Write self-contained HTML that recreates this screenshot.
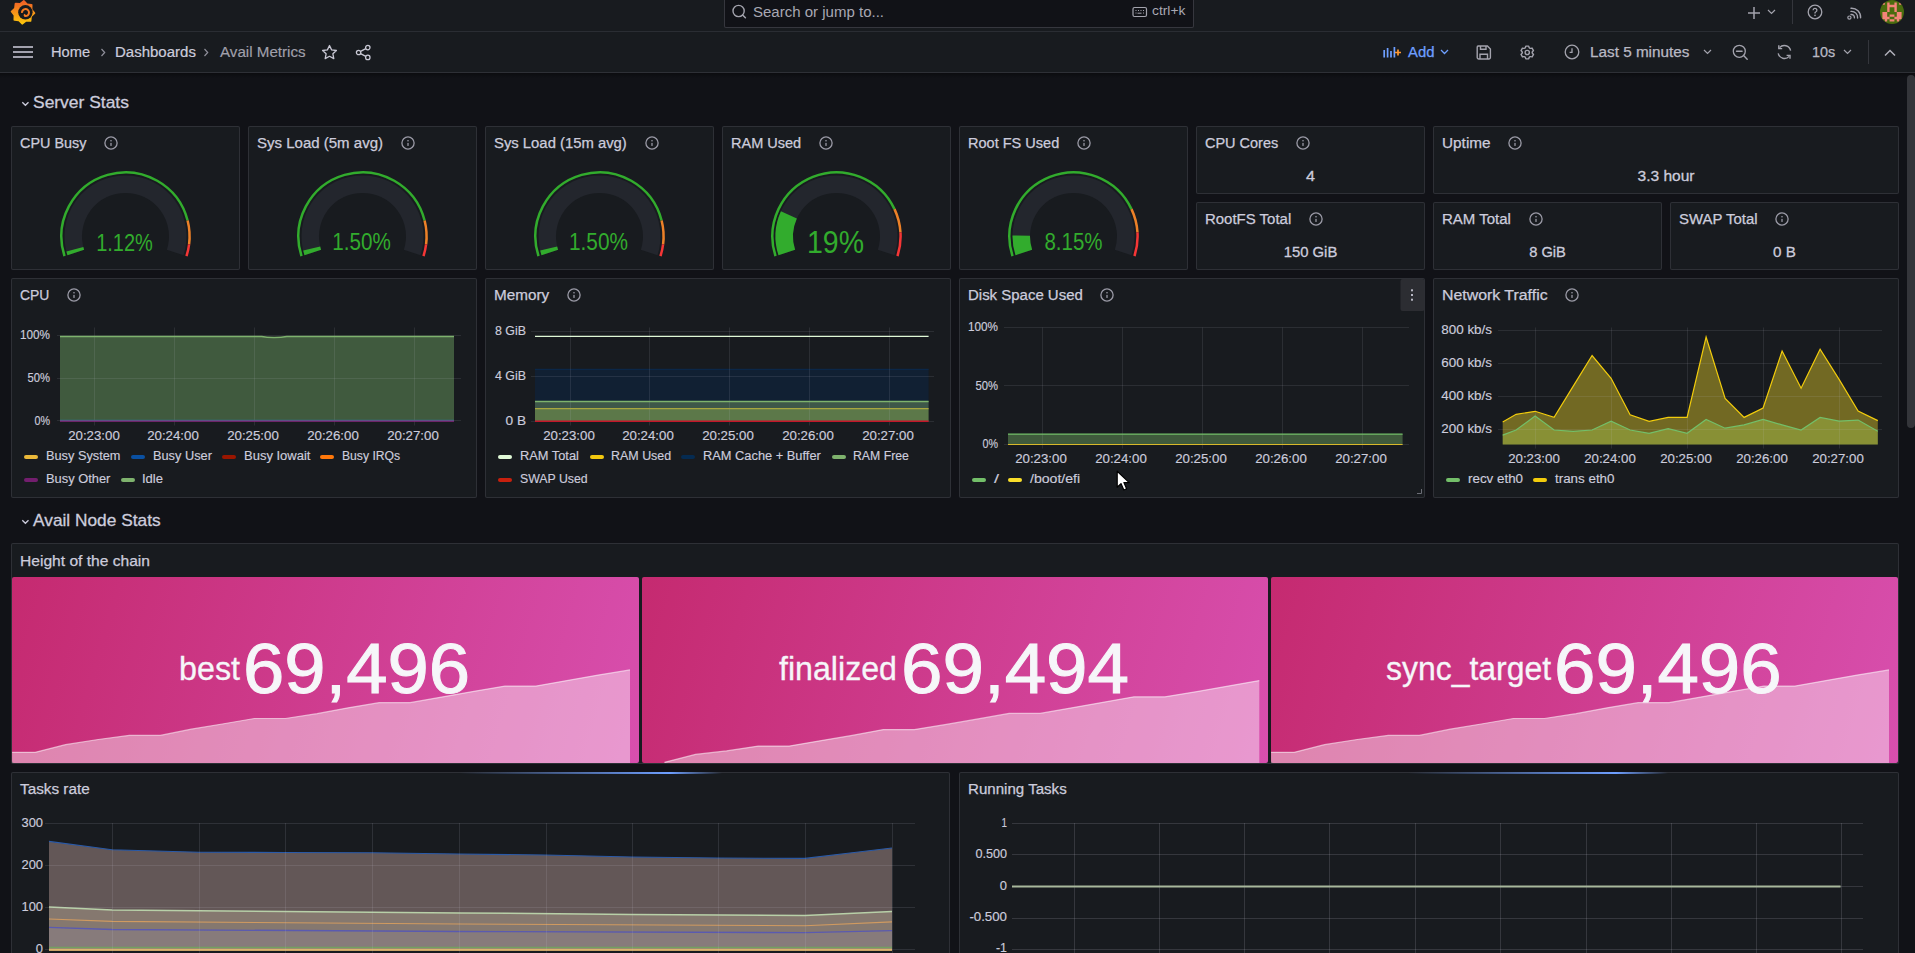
<!DOCTYPE html><html><head><meta charset="utf-8"><style>
*{box-sizing:border-box;margin:0;padding:0}
html,body{width:1915px;height:953px;overflow:hidden;background:#111217;font-family:"Liberation Sans",sans-serif;color:#ccccdc}
.a{position:absolute}
.pn{position:absolute;background:#181b1f;border:1px solid rgba(204,204,220,0.12);border-radius:2px}
.tt{position:absolute;font-size:14px;line-height:16px;color:#ccccdc;white-space:nowrap;-webkit-text-stroke:0.25px #ccccdc}
.sv{position:absolute;font-size:15px;line-height:18px;color:#ccccdc;white-space:nowrap;text-align:center;-webkit-text-stroke:0.3px #ccccdc}
.ax{position:absolute;font-size:12px;line-height:14px;color:#ccccdc;white-space:nowrap}
.lg{position:absolute;font-size:12px;line-height:14px;color:#ccccdc;white-space:nowrap}
.lb{position:absolute;width:14px;height:4px;border-radius:2px}
svg{position:absolute;overflow:visible}
</style></head><body><div class="a" style="left:0;top:0;width:1915px;height:31px;background:#181b1f"></div>
<div class="a" style="left:0;top:31px;width:1915px;height:1px;background:#2a2d33"></div>
<div class="a" style="left:0;top:32px;width:1915px;height:40px;background:#181b1f"></div>
<div class="a" style="left:0;top:72px;width:1915px;height:1px;background:#2e3036"></div>
<div class="a" style="left:0;top:73px;width:1915px;height:5px;background:linear-gradient(rgba(0,0,0,0.35),rgba(0,0,0,0))"></div>
<svg style="left:0;top:0" width="40" height="30" viewBox="0 0 40 30">
<defs><linearGradient id="lg1" x1="0" y1="0" x2="0" y2="1"><stop offset="0" stop-color="#f05a28"/><stop offset="1" stop-color="#fbca0a"/></linearGradient></defs>
<path fill="url(#lg1)" d="M23.00 0.40 L23.86 -0.07 L24.66 0.52 L27.42 3.44 L31.41 3.89 L32.36 4.16 L32.50 5.14 L32.39 9.16 L34.90 12.30 L35.37 13.16 L34.78 13.96 L31.86 16.72 L31.41 20.71 L31.14 21.66 L30.16 21.80 L26.14 21.69 L23.00 24.20 L22.14 24.67 L21.34 24.08 L18.58 21.16 L14.59 20.71 L13.64 20.44 L13.50 19.46 L13.61 15.44 L11.10 12.30 L10.63 11.44 L11.22 10.64 L14.14 7.88 L14.59 3.89 L14.86 2.94 L15.84 2.80 L19.86 2.91Z"/>
<circle cx="25.4" cy="12.3" r="7.2" fill="#181b1f"/>
<path d="M22.01 12.91 A3.5 3.5 0 1 1 25.19 16.09 Q24.20 15.40 24.90 14.20" fill="none" stroke="#f47a22" stroke-width="2"/>
</svg>
<div class="a" style="left:724px;top:-6px;width:470px;height:34px;background:#111217;border:1px solid rgba(204,204,220,0.2);border-radius:2px"></div>
<svg style="left:731px;top:4px" width="16" height="16" viewBox="0 0 16 16"><circle cx="7.6" cy="7" r="5.6" fill="none" stroke="#a3a3ad" stroke-width="1.4"/><path d="M11.6 11 L14.4 13.8" stroke="#a3a3ad" stroke-width="1.5" stroke-linecap="round"/></svg>
<div class="a" style="left:753px;top:3.0px;font-size:14px;line-height:18px;color:#a8a8b3;white-space:nowrap;;transform:scaleX(1.0724);transform-origin:left center;">Search or jump to...</div>
<svg style="left:1132px;top:6px" width="16" height="12" viewBox="0 0 16 12"><rect x="1" y="1.5" width="13.5" height="9" rx="1.5" fill="none" stroke="#a3a3ad" stroke-width="1.2"/><path d="M3.5 4.5h1M6 4.5h1M8.5 4.5h1M11 4.5h1M3.5 7h1M11 7h1M5.5 7.2h4" stroke="#a3a3ad" stroke-width="1"/></svg>
<div class="a" style="left:1152px;top:3.0px;font-size:12px;line-height:16px;color:#a8a8b3;white-space:nowrap;;transform:scaleX(1.1516);transform-origin:left center;">ctrl+k</div>
<svg style="left:1747px;top:6px" width="14" height="14" viewBox="0 0 14 14"><path d="M7 1v12M1 7h12" stroke="#a3a3ad" stroke-width="1.5"/></svg>
<svg style="left:1767px;top:9px" width="9" height="6" viewBox="0 0 9 6"><path d="M1 1l3.5 3.5L8 1" fill="none" stroke="#a3a3ad" stroke-width="1.2"/></svg>
<div class="a" style="left:1792px;top:0;width:1px;height:24px;background:#34363c"></div>
<svg style="left:1807px;top:4px" width="16" height="16" viewBox="0 0 16 16"><circle cx="8" cy="8" r="6.8" fill="none" stroke="#a3a3ad" stroke-width="1.3"/><path d="M6.1 6.2a1.9 1.9 0 1 1 2.6 1.8c-.5.2-.7.5-.7 1v.6" fill="none" stroke="#a3a3ad" stroke-width="1.3"/><circle cx="8" cy="11.4" r=".8" fill="#a3a3ad"/></svg>
<svg style="left:1846px;top:5px" width="16" height="16" viewBox="0 0 16 16"><path d="M5 3.2a9 9 0 0 1 9.6 9.6M5 6.4a6 6 0 0 1 6.6 6.6M5 9.5a3 3 0 0 1 3.4 3.4" fill="none" stroke="#a3a3ad" stroke-width="1.4" stroke-linecap="round"/><circle cx="3.4" cy="12.6" r="1.6" fill="none" stroke="#a3a3ad" stroke-width="1.2"/></svg>
<svg style="left:1880px;top:0px" width="24" height="24" viewBox="0 0 24 24"><defs><clipPath id="avc"><circle cx="12" cy="12" r="12"/></clipPath></defs><g clip-path="url(#avc)"><rect width="24" height="24" fill="#4a6c0e"/><path d="M2.40 2.40h2.4v2.4h-2.4zM7.20 2.40h2.4v2.4h-2.4zM14.40 2.40h2.4v2.4h-2.4zM19.20 2.40h2.4v2.4h-2.4zM7.20 4.80h2.4v2.4h-2.4zM9.60 4.80h2.4v2.4h-2.4zM12.00 4.80h2.4v2.4h-2.4zM14.40 4.80h2.4v2.4h-2.4zM7.20 7.20h2.4v2.4h-2.4zM14.40 7.20h2.4v2.4h-2.4zM7.20 9.60h2.4v2.4h-2.4zM14.40 9.60h2.4v2.4h-2.4zM2.40 12.00h2.4v2.4h-2.4zM4.80 12.00h2.4v2.4h-2.4zM16.80 12.00h2.4v2.4h-2.4zM19.20 12.00h2.4v2.4h-2.4zM2.40 14.40h2.4v2.4h-2.4zM4.80 14.40h2.4v2.4h-2.4zM9.60 14.40h2.4v2.4h-2.4zM12.00 14.40h2.4v2.4h-2.4zM16.80 14.40h2.4v2.4h-2.4zM19.20 14.40h2.4v2.4h-2.4zM2.40 16.80h2.4v2.4h-2.4zM4.80 16.80h2.4v2.4h-2.4zM7.20 16.80h2.4v2.4h-2.4zM14.40 16.80h2.4v2.4h-2.4zM16.80 16.80h2.4v2.4h-2.4zM19.20 16.80h2.4v2.4h-2.4zM4.80 19.20h2.4v2.4h-2.4zM9.60 19.20h2.4v2.4h-2.4zM12.00 19.20h2.4v2.4h-2.4zM16.80 19.20h2.4v2.4h-2.4z" fill="#f4847a"/></g></svg>
<svg style="left:13px;top:46px" width="20" height="12" viewBox="0 0 20 12"><path d="M0 1h20M0 6h20M0 11h20" stroke="#d0d0de" stroke-width="1.6"/></svg>
<div class="a" style="left:51px;top:43.0px;font-size:14px;line-height:18px;color:#ccccdc;white-space:nowrap;-webkit-text-stroke:0.2px #ccccdc;transform:scaleX(1.0471);transform-origin:left center;">Home</div>
<svg style="left:99px;top:48px" width="8" height="9" viewBox="0 0 8 9"><path d="M2.5 1l3.2 3.5L2.5 8" fill="none" stroke="#8e8e99" stroke-width="1.2"/></svg>
<div class="a" style="left:115px;top:43.0px;font-size:14px;line-height:18px;color:#ccccdc;white-space:nowrap;-webkit-text-stroke:0.2px #ccccdc;transform:scaleX(1.0717);transform-origin:left center;">Dashboards</div>
<svg style="left:202px;top:48px" width="8" height="9" viewBox="0 0 8 9"><path d="M2.5 1l3.2 3.5L2.5 8" fill="none" stroke="#8e8e99" stroke-width="1.2"/></svg>
<div class="a" style="left:220px;top:43.0px;font-size:14px;line-height:18px;color:#a0a0ab;white-space:nowrap;-webkit-text-stroke:0.15px #a0a0ab;transform:scaleX(1.0823);transform-origin:left center;">Avail Metrics</div>
<svg style="left:321px;top:44px" width="17" height="17" viewBox="0 0 17 17"><path d="M8.5 1.5l2.1 4.4 4.8.6-3.5 3.3.9 4.8-4.3-2.3-4.3 2.3.9-4.8L1.6 6.5l4.8-.6z" fill="none" stroke="#c8c8d4" stroke-width="1.3" stroke-linejoin="round"/></svg>
<svg style="left:355px;top:44px" width="17" height="17" viewBox="0 0 17 17"><circle cx="12.8" cy="3.6" r="2.2" fill="none" stroke="#c8c8d4" stroke-width="1.3"/><circle cx="3.6" cy="8.5" r="2.2" fill="none" stroke="#c8c8d4" stroke-width="1.3"/><circle cx="12.8" cy="13.4" r="2.2" fill="none" stroke="#c8c8d4" stroke-width="1.3"/><path d="M5.6 7.4l5.2-2.8M5.6 9.6l5.2 2.8" stroke="#c8c8d4" stroke-width="1.3"/></svg>
<svg style="left:1383px;top:46px" width="20" height="12" viewBox="0 0 20 12"><path d="M1.2 4v7.5M4.6 2v9.5M8 5v6.5M11.4 1v10.5" stroke="#6e9fff" stroke-width="1.7"/><path d="M15 3.5v6M12 6.5h6" stroke="#ff9830" stroke-width="1.7"/></svg>
<div class="a" style="left:1408px;top:43.0px;font-size:14px;line-height:18px;color:#6e9fff;white-space:nowrap;-webkit-text-stroke:0.25px #6e9fff;transform:scaleX(1.0639);transform-origin:left center;">Add</div>
<svg style="left:1440px;top:49px" width="9" height="6" viewBox="0 0 9 6"><path d="M1 1l3.5 3.5L8 1" fill="none" stroke="#6e9fff" stroke-width="1.3"/></svg>
<svg style="left:1476px;top:45px" width="16" height="15" viewBox="0 0 16 15"><path d="M2.2 1h9.2l3 3v8.5a1.5 1.5 0 0 1-1.5 1.5H2.7a1.5 1.5 0 0 1-1.5-1.5V2.2A1.2 1.2 0 0 1 2.2 1z" fill="none" stroke="#a3a3ad" stroke-width="1.4"/><path d="M4.5 1v3.2h5.5V1M4 14V9.2h7.5V14" fill="none" stroke="#a3a3ad" stroke-width="1.4"/></svg>
<svg style="left:1519px;top:44px" width="17" height="17" viewBox="0 0 24 24"><path fill="#a3a3ad" d="M19.9 12.66a1 1 0 0 1 0-1.32l1.28-1.44a1 1 0 0 0 .12-1.17l-2-3.46a1 1 0 0 0-1.07-.48l-1.88.38a1 1 0 0 1-1.15-.66l-.61-1.83a1 1 0 0 0-.95-.68h-4a1 1 0 0 0-1 .68l-.56 1.83a1 1 0 0 1-1.15.66L5 4.79a1 1 0 0 0-1 .48L2 8.73a1 1 0 0 0 .1 1.17l1.27 1.44a1 1 0 0 1 0 1.32L2.1 14.1a1 1 0 0 0-.1 1.17l2 3.46a1 1 0 0 0 1.07.48l1.88-.38a1 1 0 0 1 1.15.66l.61 1.83a1 1 0 0 0 1 .68h4a1 1 0 0 0 .95-.68l.61-1.83a1 1 0 0 1 1.15-.66l1.88.38a1 1 0 0 0 1.07-.48l2-3.46a1 1 0 0 0-.12-1.17ZM18.41 14l.8.9-1.28 2.22-1.18-.24a3 3 0 0 0-3.45 2L12.92 20h-2.56L10 18.86a3 3 0 0 0-3.45-2l-1.18.24-1.3-2.21.8-.9a3 3 0 0 0 0-4l-.8-.9 1.28-2.2 1.18.24a3 3 0 0 0 3.45-2L10.36 4h2.56l.38 1.14a3 3 0 0 0 3.45 2l1.18-.24 1.28 2.22-.8.9a3 3 0 0 0 0 3.98Zm-6.77-6a4 4 0 1 0 4 4 4 4 0 0 0-4-4Zm0 6a2 2 0 1 1 2-2 2 2 0 0 1-2 2Z"/></svg>
<svg style="left:1564px;top:44px" width="16" height="16" viewBox="0 0 16 16"><circle cx="8" cy="8" r="6.8" fill="none" stroke="#a3a3ad" stroke-width="1.3"/><path d="M8 4.2V8.3H5.6" fill="none" stroke="#a3a3ad" stroke-width="1.3"/></svg>
<div class="a" style="left:1589.5px;top:43.0px;font-size:14px;line-height:18px;color:#b9b9c4;white-space:nowrap;-webkit-text-stroke:0.25px #b9b9c4;transform:scaleX(1.0918);transform-origin:left center;">Last 5 minutes</div>
<svg style="left:1703px;top:49px" width="9" height="6" viewBox="0 0 9 6"><path d="M1 1l3.5 3.5L8 1" fill="none" stroke="#a3a3ad" stroke-width="1.2"/></svg>
<svg style="left:1732px;top:44px" width="17" height="17" viewBox="0 0 17 17"><circle cx="7.3" cy="7.3" r="6" fill="none" stroke="#a3a3ad" stroke-width="1.3"/><path d="M4.5 7.3h5.6M11.6 11.6l3.6 3.6" stroke="#a3a3ad" stroke-width="1.4" stroke-linecap="round"/></svg>
<svg style="left:1776px;top:44px" width="17" height="16" viewBox="0 0 17 16"><path d="M14.6 6.6A6.4 6.4 0 0 0 3.6 3.6M2.2 9.4a6.4 6.4 0 0 0 11 3" fill="none" stroke="#a3a3ad" stroke-width="1.4"/><path d="M2.8 1.2v3.4h3.4M14 14.8v-3.4h-3.4" fill="none" stroke="#a3a3ad" stroke-width="1.4"/></svg>
<div class="a" style="left:1811.5px;top:43.0px;font-size:14px;line-height:18px;color:#b9b9c4;white-space:nowrap;-webkit-text-stroke:0.25px #b9b9c4;transform:scaleX(1.0279);transform-origin:left center;">10s</div>
<svg style="left:1843px;top:49px" width="9" height="6" viewBox="0 0 9 6"><path d="M1 1l3.5 3.5L8 1" fill="none" stroke="#a3a3ad" stroke-width="1.2"/></svg>
<div class="a" style="left:1868px;top:40px;width:1px;height:24px;background:#34363c"></div>
<svg style="left:1884px;top:49px" width="12" height="8" viewBox="0 0 12 8"><path d="M1 6.5L6 1.5l5 5" fill="none" stroke="#b0b0ba" stroke-width="1.5"/></svg>
<div class="a" style="left:1907px;top:75px;width:8px;height:353px;background:#34353a;border-radius:4px"></div>
<svg style="left:20.5px;top:100px" width="9" height="8" viewBox="0 0 9 8"><path d="M1.3 2.2l3.1 3.1 3.1-3.1" fill="none" stroke="#ccccdc" stroke-width="1.3"/></svg>
<div class="a" style="left:33px;top:93px;font-size:17px;line-height:20px;color:#ccccdc;white-space:nowrap;-webkit-text-stroke:0.3px #ccccdc;transform:scaleX(1.0253);transform-origin:left center;">Server Stats</div>
<svg style="left:20.5px;top:518px" width="9" height="8" viewBox="0 0 9 8"><path d="M1.3 2.2l3.1 3.1 3.1-3.1" fill="none" stroke="#ccccdc" stroke-width="1.3"/></svg>
<div class="a" style="left:33px;top:511px;font-size:17px;line-height:20px;color:#ccccdc;white-space:nowrap;-webkit-text-stroke:0.3px #ccccdc;transform:scaleX(1.0179);transform-origin:left center;">Avail Node Stats</div>
<div class="pn" style="left:11px;top:126px;width:229px;height:144px;"></div>
<div class="tt" style="left:20px;top:135px;transform:scaleX(1.0283);transform-origin:left center;">CPU Busy</div>
<svg style="left:103px;top:135px" width="16" height="16" viewBox="0 0 16 16"><circle cx="8" cy="8" r="6.1" fill="none" stroke="#9a9aa6" stroke-width="1.3"/><rect x="7.35" y="7.9" width="1.3" height="3" fill="#9a9aa6"/><rect x="7.35" y="5.0" width="1.3" height="1.4" fill="#9a9aa6"/></svg>
<svg style="left:11px;top:126px" width="229" height="144" viewBox="0 0 229 144"><path d="M64.81 126.55A52.25 52.25 0 1 1 164.19 126.55" fill="none" stroke="#23262d" stroke-width="17.5"/><path d="M64.81 126.55A52.25 52.25 0 0 1 63.86 123.29" fill="none" stroke="rgb(50,172,45)" stroke-width="17.5"/><path d="M53.54 130.21A64.1 64.1 0 1 1 176.59 94.46" fill="none" stroke="rgb(50,172,45)" stroke-width="2.5"/><path d="M176.59 94.46A64.1 64.1 0 0 1 178.09 118.43" fill="none" stroke="rgb(237,129,40)" stroke-width="2.5"/><path d="M178.09 118.43A64.1 64.1 0 0 1 175.46 130.21" fill="none" stroke="rgb(245,54,54)" stroke-width="2.5"/></svg>
<div class="a" style="left:10px;width:229px;text-align:center;top:231.56px;font-size:23.2px;line-height:23.2px;color:rgb(50,172,45);white-space:nowrap;transform:scaleX(0.8620);transform-origin:center center;">1.12%</div>
<div class="pn" style="left:248px;top:126px;width:229px;height:144px;"></div>
<div class="tt" style="left:257px;top:135px;transform:scaleX(1.0724);transform-origin:left center;">Sys Load (5m avg)</div>
<svg style="left:400px;top:135px" width="16" height="16" viewBox="0 0 16 16"><circle cx="8" cy="8" r="6.1" fill="none" stroke="#9a9aa6" stroke-width="1.3"/><rect x="7.35" y="7.9" width="1.3" height="3" fill="#9a9aa6"/><rect x="7.35" y="5.0" width="1.3" height="1.4" fill="#9a9aa6"/></svg>
<svg style="left:248px;top:126px" width="229" height="144" viewBox="0 0 229 144"><path d="M64.81 126.55A52.25 52.25 0 1 1 164.19 126.55" fill="none" stroke="#23262d" stroke-width="17.5"/><path d="M64.81 126.55A52.25 52.25 0 0 1 63.69 122.56" fill="none" stroke="rgb(50,172,45)" stroke-width="17.5"/><path d="M53.54 130.21A64.1 64.1 0 1 1 176.59 94.46" fill="none" stroke="rgb(50,172,45)" stroke-width="2.5"/><path d="M176.59 94.46A64.1 64.1 0 0 1 178.09 118.43" fill="none" stroke="rgb(237,129,40)" stroke-width="2.5"/><path d="M178.09 118.43A64.1 64.1 0 0 1 175.46 130.21" fill="none" stroke="rgb(245,54,54)" stroke-width="2.5"/></svg>
<div class="a" style="left:247px;width:229px;text-align:center;top:231.33px;font-size:23.0px;line-height:23.0px;color:rgb(50,172,45);white-space:nowrap;transform:scaleX(0.8971);transform-origin:center center;">1.50%</div>
<div class="pn" style="left:485px;top:126px;width:229px;height:144px;"></div>
<div class="tt" style="left:494px;top:135px;transform:scaleX(1.0601);transform-origin:left center;">Sys Load (15m avg)</div>
<svg style="left:644px;top:135px" width="16" height="16" viewBox="0 0 16 16"><circle cx="8" cy="8" r="6.1" fill="none" stroke="#9a9aa6" stroke-width="1.3"/><rect x="7.35" y="7.9" width="1.3" height="3" fill="#9a9aa6"/><rect x="7.35" y="5.0" width="1.3" height="1.4" fill="#9a9aa6"/></svg>
<svg style="left:485px;top:126px" width="229" height="144" viewBox="0 0 229 144"><path d="M64.81 126.55A52.25 52.25 0 1 1 164.19 126.55" fill="none" stroke="#23262d" stroke-width="17.5"/><path d="M64.81 126.55A52.25 52.25 0 0 1 63.69 122.56" fill="none" stroke="rgb(50,172,45)" stroke-width="17.5"/><path d="M53.54 130.21A64.1 64.1 0 1 1 176.59 94.46" fill="none" stroke="rgb(50,172,45)" stroke-width="2.5"/><path d="M176.59 94.46A64.1 64.1 0 0 1 178.09 118.43" fill="none" stroke="rgb(237,129,40)" stroke-width="2.5"/><path d="M178.09 118.43A64.1 64.1 0 0 1 175.46 130.21" fill="none" stroke="rgb(245,54,54)" stroke-width="2.5"/></svg>
<div class="a" style="left:484px;width:229px;text-align:center;top:231.33px;font-size:23.0px;line-height:23.0px;color:rgb(50,172,45);white-space:nowrap;transform:scaleX(0.9047);transform-origin:center center;">1.50%</div>
<div class="pn" style="left:722px;top:126px;width:229px;height:144px;"></div>
<div class="tt" style="left:731px;top:135px;transform:scaleX(1.0372);transform-origin:left center;">RAM Used</div>
<svg style="left:818px;top:135px" width="16" height="16" viewBox="0 0 16 16"><circle cx="8" cy="8" r="6.1" fill="none" stroke="#9a9aa6" stroke-width="1.3"/><rect x="7.35" y="7.9" width="1.3" height="3" fill="#9a9aa6"/><rect x="7.35" y="5.0" width="1.3" height="1.4" fill="#9a9aa6"/></svg>
<svg style="left:722px;top:126px" width="229" height="144" viewBox="0 0 229 144"><path d="M64.81 126.55A52.25 52.25 0 1 1 164.19 126.55" fill="none" stroke="#23262d" stroke-width="17.5"/><path d="M64.81 126.55A52.25 52.25 0 0 1 66.89 88.87" fill="none" stroke="rgb(50,172,45)" stroke-width="17.5"/><path d="M53.54 130.21A64.1 64.1 0 0 1 172.50 83.11" fill="none" stroke="rgb(50,172,45)" stroke-width="2.5"/><path d="M172.50 83.11A64.1 64.1 0 0 1 178.47 106.38" fill="none" stroke="rgb(237,129,40)" stroke-width="2.5"/><path d="M178.47 106.38A64.1 64.1 0 0 1 175.46 130.21" fill="none" stroke="rgb(245,54,54)" stroke-width="2.5"/></svg>
<div class="a" style="left:721px;width:229px;text-align:center;top:227.45px;font-size:31.6px;line-height:31.6px;color:rgb(50,172,45);white-space:nowrap;transform:scaleX(0.9013);transform-origin:center center;">19%</div>
<div class="pn" style="left:959px;top:126px;width:229px;height:144px;"></div>
<div class="tt" style="left:968px;top:135px;transform:scaleX(1.0373);transform-origin:left center;">Root FS Used</div>
<svg style="left:1076px;top:135px" width="16" height="16" viewBox="0 0 16 16"><circle cx="8" cy="8" r="6.1" fill="none" stroke="#9a9aa6" stroke-width="1.3"/><rect x="7.35" y="7.9" width="1.3" height="3" fill="#9a9aa6"/><rect x="7.35" y="5.0" width="1.3" height="1.4" fill="#9a9aa6"/></svg>
<svg style="left:959px;top:126px" width="229" height="144" viewBox="0 0 229 144"><path d="M64.81 126.55A52.25 52.25 0 1 1 164.19 126.55" fill="none" stroke="#23262d" stroke-width="17.5"/><path d="M64.81 126.55A52.25 52.25 0 0 1 62.26 109.58" fill="none" stroke="rgb(50,172,45)" stroke-width="17.5"/><path d="M53.54 130.21A64.1 64.1 0 0 1 172.50 83.11" fill="none" stroke="rgb(50,172,45)" stroke-width="2.5"/><path d="M172.50 83.11A64.1 64.1 0 0 1 178.47 106.38" fill="none" stroke="rgb(237,129,40)" stroke-width="2.5"/><path d="M178.47 106.38A64.1 64.1 0 0 1 175.46 130.21" fill="none" stroke="rgb(245,54,54)" stroke-width="2.5"/></svg>
<div class="a" style="left:959px;width:229px;text-align:center;top:231.33px;font-size:23.0px;line-height:23.0px;color:rgb(50,172,45);white-space:nowrap;transform:scaleX(0.8909);transform-origin:center center;">8.15%</div>
<div class="pn" style="left:1196px;top:126px;width:229px;height:68px;"></div>
<div class="tt" style="left:1205px;top:135px;transform:scaleX(1.0340);transform-origin:left center;">CPU Cores</div>
<svg style="left:1295px;top:135px" width="16" height="16" viewBox="0 0 16 16"><circle cx="8" cy="8" r="6.1" fill="none" stroke="#9a9aa6" stroke-width="1.3"/><rect x="7.35" y="7.9" width="1.3" height="3" fill="#9a9aa6"/><rect x="7.35" y="5.0" width="1.3" height="1.4" fill="#9a9aa6"/></svg>
<div class="sv" style="left:1196px;width:229px;top:167px;transform:scaleX(1.0790);transform-origin:center center;">4</div>
<div class="pn" style="left:1433px;top:126px;width:466px;height:68px;"></div>
<div class="tt" style="left:1442px;top:135px;transform:scaleX(1.0960);transform-origin:left center;">Uptime</div>
<svg style="left:1507px;top:135px" width="16" height="16" viewBox="0 0 16 16"><circle cx="8" cy="8" r="6.1" fill="none" stroke="#9a9aa6" stroke-width="1.3"/><rect x="7.35" y="7.9" width="1.3" height="3" fill="#9a9aa6"/><rect x="7.35" y="5.0" width="1.3" height="1.4" fill="#9a9aa6"/></svg>
<div class="sv" style="left:1433px;width:466px;top:167px;transform:scaleX(1.0357);transform-origin:center center;">3.3 hour</div>
<div class="pn" style="left:1196px;top:202px;width:229px;height:68px;"></div>
<div class="tt" style="left:1205px;top:211px;transform:scaleX(1.0686);transform-origin:left center;">RootFS Total</div>
<svg style="left:1308px;top:211px" width="16" height="16" viewBox="0 0 16 16"><circle cx="8" cy="8" r="6.1" fill="none" stroke="#9a9aa6" stroke-width="1.3"/><rect x="7.35" y="7.9" width="1.3" height="3" fill="#9a9aa6"/><rect x="7.35" y="5.0" width="1.3" height="1.4" fill="#9a9aa6"/></svg>
<div class="sv" style="left:1196px;width:229px;top:243px;transform:scaleX(0.9890);transform-origin:center center;">150 GiB</div>
<div class="pn" style="left:1433px;top:202px;width:229px;height:68px;"></div>
<div class="tt" style="left:1442px;top:211px;transform:scaleX(1.0713);transform-origin:left center;">RAM Total</div>
<svg style="left:1528px;top:211px" width="16" height="16" viewBox="0 0 16 16"><circle cx="8" cy="8" r="6.1" fill="none" stroke="#9a9aa6" stroke-width="1.3"/><rect x="7.35" y="7.9" width="1.3" height="3" fill="#9a9aa6"/><rect x="7.35" y="5.0" width="1.3" height="1.4" fill="#9a9aa6"/></svg>
<div class="sv" style="left:1433px;width:229px;top:243px;transform:scaleX(0.9783);transform-origin:center center;">8 GiB</div>
<div class="pn" style="left:1670px;top:202px;width:229px;height:68px;"></div>
<div class="tt" style="left:1679px;top:211px;transform:scaleX(1.0656);transform-origin:left center;">SWAP Total</div>
<svg style="left:1774px;top:211px" width="16" height="16" viewBox="0 0 16 16"><circle cx="8" cy="8" r="6.1" fill="none" stroke="#9a9aa6" stroke-width="1.3"/><rect x="7.35" y="7.9" width="1.3" height="3" fill="#9a9aa6"/><rect x="7.35" y="5.0" width="1.3" height="1.4" fill="#9a9aa6"/></svg>
<div class="sv" style="left:1670px;width:229px;top:243px;transform:scaleX(1.0127);transform-origin:center center;">0 B</div>
<div class="pn" style="left:11px;top:278px;width:466px;height:220px;"></div>
<div class="tt" style="left:20px;top:287px;transform:scaleX(0.9912);transform-origin:left center;">CPU</div>
<svg style="left:66px;top:287px" width="16" height="16" viewBox="0 0 16 16"><circle cx="8" cy="8" r="6.1" fill="none" stroke="#9a9aa6" stroke-width="1.3"/><rect x="7.35" y="7.9" width="1.3" height="3" fill="#9a9aa6"/><rect x="7.35" y="5.0" width="1.3" height="1.4" fill="#9a9aa6"/></svg>
<div class="pn" style="left:485px;top:278px;width:466px;height:220px;"></div>
<div class="tt" style="left:494px;top:287px;transform:scaleX(1.0899);transform-origin:left center;">Memory</div>
<svg style="left:566px;top:287px" width="16" height="16" viewBox="0 0 16 16"><circle cx="8" cy="8" r="6.1" fill="none" stroke="#9a9aa6" stroke-width="1.3"/><rect x="7.35" y="7.9" width="1.3" height="3" fill="#9a9aa6"/><rect x="7.35" y="5.0" width="1.3" height="1.4" fill="#9a9aa6"/></svg>
<div class="pn" style="left:959px;top:278px;width:466px;height:220px;"></div>
<div class="tt" style="left:968px;top:287px;transform:scaleX(1.0691);transform-origin:left center;">Disk Space Used</div>
<svg style="left:1099px;top:287px" width="16" height="16" viewBox="0 0 16 16"><circle cx="8" cy="8" r="6.1" fill="none" stroke="#9a9aa6" stroke-width="1.3"/><rect x="7.35" y="7.9" width="1.3" height="3" fill="#9a9aa6"/><rect x="7.35" y="5.0" width="1.3" height="1.4" fill="#9a9aa6"/></svg>
<div class="pn" style="left:1433px;top:278px;width:466px;height:220px;"></div>
<div class="tt" style="left:1442px;top:287px;transform:scaleX(1.1343);transform-origin:left center;">Network Traffic</div>
<svg style="left:1564px;top:287px" width="16" height="16" viewBox="0 0 16 16"><circle cx="8" cy="8" r="6.1" fill="none" stroke="#9a9aa6" stroke-width="1.3"/><rect x="7.35" y="7.9" width="1.3" height="3" fill="#9a9aa6"/><rect x="7.35" y="5.0" width="1.3" height="1.4" fill="#9a9aa6"/></svg>
<svg style="left:0;top:0" width="1915" height="953" viewBox="0 0 1915 953"><path d="M60 336.4H261.6C268 337.8 280 337.8 286.8 336.4H454V421H60Z" fill="#405a3e"/><path d="M57 335.5H461" stroke="rgba(204,204,220,0.11)" stroke-width="1"/><path d="M57 378.5H461" stroke="rgba(204,204,220,0.11)" stroke-width="1"/><path d="M57 420.5H461" stroke="rgba(204,204,220,0.11)" stroke-width="1"/><path d="M94.5 327.5V425.5" stroke="rgba(204,204,220,0.11)" stroke-width="1"/><path d="M174.5 327.5V425.5" stroke="rgba(204,204,220,0.11)" stroke-width="1"/><path d="M254.5 327.5V425.5" stroke="rgba(204,204,220,0.11)" stroke-width="1"/><path d="M334.5 327.5V425.5" stroke="rgba(204,204,220,0.11)" stroke-width="1"/><path d="M414.5 327.5V425.5" stroke="rgba(204,204,220,0.11)" stroke-width="1"/><path d="M60 336.4H261.6C268 337.8 280 337.8 286.8 336.4H454" fill="none" stroke="#7eb26d" stroke-width="1.5"/><path d="M60 420.3H454" stroke="#2a7a9a" stroke-width="1"/><path d="M60 421.2H454" stroke="#8a2a80" stroke-width="1.3"/><rect x="535" y="369" width="393.6" height="32" fill="#112033"/><path d="M535 369.3H928.6" stroke="#0b2a4e" stroke-width="1"/><rect x="535" y="401" width="393.6" height="7.5" fill="#3e5749"/><rect x="535" y="408.5" width="393.6" height="12.8" fill="#5c7849"/><path d="M531 331.5H934" stroke="rgba(204,204,220,0.11)" stroke-width="1"/><path d="M531 376.5H934" stroke="rgba(204,204,220,0.11)" stroke-width="1"/><path d="M531 421.5H934" stroke="rgba(204,204,220,0.11)" stroke-width="1"/><path d="M570.5 327.5V425.5" stroke="rgba(204,204,220,0.11)" stroke-width="1"/><path d="M649.5 327.5V425.5" stroke="rgba(204,204,220,0.11)" stroke-width="1"/><path d="M729.5 327.5V425.5" stroke="rgba(204,204,220,0.11)" stroke-width="1"/><path d="M809.5 327.5V425.5" stroke="rgba(204,204,220,0.11)" stroke-width="1"/><path d="M889.5 327.5V425.5" stroke="rgba(204,204,220,0.11)" stroke-width="1"/><path d="M535 401.5H928.6" stroke="#7eb26d" stroke-width="1.5"/><path d="M535 408.6H928.6" stroke="#a8a640" stroke-width="1.2"/><path d="M535 421.2H928.6" stroke="#c4162a" stroke-width="1.6"/><path d="M535 336.4H928.6" stroke="#e0f9d7" stroke-width="1.25"/><rect x="1008" y="434" width="394.6" height="10.5" fill="#3f5a3c"/><path d="M1004 327.5H1409" stroke="rgba(204,204,220,0.11)" stroke-width="1"/><path d="M1004 385.5H1409" stroke="rgba(204,204,220,0.11)" stroke-width="1"/><path d="M1004 444.5H1409" stroke="rgba(204,204,220,0.11)" stroke-width="1"/><path d="M1042.5 327.5V448.5" stroke="rgba(204,204,220,0.11)" stroke-width="1"/><path d="M1122.5 327.5V448.5" stroke="rgba(204,204,220,0.11)" stroke-width="1"/><path d="M1202.5 327.5V448.5" stroke="rgba(204,204,220,0.11)" stroke-width="1"/><path d="M1282.5 327.5V448.5" stroke="rgba(204,204,220,0.11)" stroke-width="1"/><path d="M1362.5 327.5V448.5" stroke="rgba(204,204,220,0.11)" stroke-width="1"/><path d="M1008 434.2H1402.6" stroke="#73bf69" stroke-width="1.3"/><path d="M1008 444.5H1402.6" stroke="#d8b82a" stroke-width="1.2"/><path d="M1502.7 435.1 L1516.1 430.0 L1535.1 416.1 L1554.1 430.0 L1573.1 431.3 L1592.1 430.0 L1611.1 421.1 L1630.1 430.0 L1649.1 433.3 L1668.1 428.7 L1687.1 433.3 L1706.1 419.4 L1725.1 428.2 L1744.1 424.9 L1763.1 419.4 L1782.1 424.9 L1801.1 430.0 L1820.1 417.4 L1839.1 421.1 L1858.1 420.1 L1877.8 431.3 L1877.8 444.5 L1502.7 444.5Z" fill="rgba(115,191,105,0.4)"/><path d="M1502.7 421.9 L1516.1 414.3 L1535.1 411.3 L1554.1 417.4 L1573.1 386.4 L1592.1 355.5 L1611.1 378.3 L1630.1 414.8 L1649.1 421.4 L1668.1 417.4 L1687.1 417.4 L1706.1 337.1 L1725.1 398.4 L1744.1 417.4 L1763.1 408.0 L1782.1 351.0 L1801.1 388.2 L1820.1 349.2 L1839.1 379.4 L1858.1 411.0 L1877.8 420.6 L1877.8 444.5 L1502.7 444.5Z" fill="rgba(250,222,42,0.4)"/><path d="M1498 330.5H1882" stroke="rgba(204,204,220,0.11)" stroke-width="1"/><path d="M1498 363.5H1882" stroke="rgba(204,204,220,0.11)" stroke-width="1"/><path d="M1498 396.5H1882" stroke="rgba(204,204,220,0.11)" stroke-width="1"/><path d="M1498 429.5H1882" stroke="rgba(204,204,220,0.11)" stroke-width="1"/><path d="M1535.5 327.5V448.5" stroke="rgba(204,204,220,0.11)" stroke-width="1"/><path d="M1611.5 327.5V448.5" stroke="rgba(204,204,220,0.11)" stroke-width="1"/><path d="M1687.5 327.5V448.5" stroke="rgba(204,204,220,0.11)" stroke-width="1"/><path d="M1763.5 327.5V448.5" stroke="rgba(204,204,220,0.11)" stroke-width="1"/><path d="M1839.5 327.5V448.5" stroke="rgba(204,204,220,0.11)" stroke-width="1"/><path d="M1502.7 435.1 L1516.1 430.0 L1535.1 416.1 L1554.1 430.0 L1573.1 431.3 L1592.1 430.0 L1611.1 421.1 L1630.1 430.0 L1649.1 433.3 L1668.1 428.7 L1687.1 433.3 L1706.1 419.4 L1725.1 428.2 L1744.1 424.9 L1763.1 419.4 L1782.1 424.9 L1801.1 430.0 L1820.1 417.4 L1839.1 421.1 L1858.1 420.1 L1877.8 431.3" fill="none" stroke="#73bf69" stroke-width="1.2"/><path d="M1502.7 421.9 L1516.1 414.3 L1535.1 411.3 L1554.1 417.4 L1573.1 386.4 L1592.1 355.5 L1611.1 378.3 L1630.1 414.8 L1649.1 421.4 L1668.1 417.4 L1687.1 417.4 L1706.1 337.1 L1725.1 398.4 L1744.1 417.4 L1763.1 408.0 L1782.1 351.0 L1801.1 388.2 L1820.1 349.2 L1839.1 379.4 L1858.1 411.0 L1877.8 420.6" fill="none" stroke="#f2cc0c" stroke-width="1.2"/><rect x="1400.5" y="279" width="24" height="32" rx="2" fill="#2c2d32"/><rect x="1411" y="289.3" width="2" height="2" fill="#b8b8c4"/><rect x="1411" y="294" width="2" height="2" fill="#b8b8c4"/><rect x="1411" y="298.7" width="2" height="2" fill="#b8b8c4"/><path d="M1417 493.5H1421.5V489" fill="none" stroke="#6b6d75" stroke-width="1"/></svg>
<div class="a" style="left:-550px;width:600px;text-align:right;top:327.0px;font-size:12px;line-height:16px;color:#ccccdc;white-space:nowrap;-webkit-text-stroke:0.15px #ccccdc;transform:scaleX(0.9775);transform-origin:right center;">100%</div>
<div class="a" style="left:-550px;width:600px;text-align:right;top:370.0px;font-size:12px;line-height:16px;color:#ccccdc;white-space:nowrap;-webkit-text-stroke:0.15px #ccccdc;transform:scaleX(0.9368);transform-origin:right center;">50%</div>
<div class="a" style="left:-550px;width:600px;text-align:right;top:413.0px;font-size:12px;line-height:16px;color:#ccccdc;white-space:nowrap;-webkit-text-stroke:0.15px #ccccdc;transform:scaleX(0.8937);transform-origin:right center;">0%</div>
<div class="a" style="left:-206.5px;width:600px;text-align:center;top:427.5px;font-size:12px;line-height:16px;color:#ccccdc;white-space:nowrap;-webkit-text-stroke:0.15px #ccccdc;transform:scaleX(1.1048);transform-origin:center center;">20:23:00</div>
<div class="a" style="left:-126.80000000000001px;width:600px;text-align:center;top:427.5px;font-size:12px;line-height:16px;color:#ccccdc;white-space:nowrap;-webkit-text-stroke:0.15px #ccccdc;transform:scaleX(1.1048);transform-origin:center center;">20:24:00</div>
<div class="a" style="left:-46.599999999999994px;width:600px;text-align:center;top:427.5px;font-size:12px;line-height:16px;color:#ccccdc;white-space:nowrap;-webkit-text-stroke:0.15px #ccccdc;transform:scaleX(1.1048);transform-origin:center center;">20:25:00</div>
<div class="a" style="left:33px;width:600px;text-align:center;top:427.5px;font-size:12px;line-height:16px;color:#ccccdc;white-space:nowrap;-webkit-text-stroke:0.15px #ccccdc;transform:scaleX(1.1048);transform-origin:center center;">20:26:00</div>
<div class="a" style="left:113px;width:600px;text-align:center;top:427.5px;font-size:12px;line-height:16px;color:#ccccdc;white-space:nowrap;-webkit-text-stroke:0.15px #ccccdc;transform:scaleX(1.1048);transform-origin:center center;">20:27:00</div>
<div class="a" style="left:-74px;width:600px;text-align:right;top:323.0px;font-size:12px;line-height:16px;color:#ccccdc;white-space:nowrap;-webkit-text-stroke:0.15px #ccccdc;transform:scaleX(1.0329);transform-origin:right center;">8 GiB</div>
<div class="a" style="left:-74px;width:600px;text-align:right;top:368.0px;font-size:12px;line-height:16px;color:#ccccdc;white-space:nowrap;-webkit-text-stroke:0.15px #ccccdc;transform:scaleX(1.0329);transform-origin:right center;">4 GiB</div>
<div class="a" style="left:-74px;width:600px;text-align:right;top:413.0px;font-size:12px;line-height:16px;color:#ccccdc;white-space:nowrap;-webkit-text-stroke:0.15px #ccccdc;transform:scaleX(1.1382);transform-origin:right center;">0 B</div>
<div class="a" style="left:268.5px;width:600px;text-align:center;top:427.5px;font-size:12px;line-height:16px;color:#ccccdc;white-space:nowrap;-webkit-text-stroke:0.15px #ccccdc;transform:scaleX(1.1048);transform-origin:center center;">20:23:00</div>
<div class="a" style="left:348.20000000000005px;width:600px;text-align:center;top:427.5px;font-size:12px;line-height:16px;color:#ccccdc;white-space:nowrap;-webkit-text-stroke:0.15px #ccccdc;transform:scaleX(1.1048);transform-origin:center center;">20:24:00</div>
<div class="a" style="left:428.4px;width:600px;text-align:center;top:427.5px;font-size:12px;line-height:16px;color:#ccccdc;white-space:nowrap;-webkit-text-stroke:0.15px #ccccdc;transform:scaleX(1.1048);transform-origin:center center;">20:25:00</div>
<div class="a" style="left:508px;width:600px;text-align:center;top:427.5px;font-size:12px;line-height:16px;color:#ccccdc;white-space:nowrap;-webkit-text-stroke:0.15px #ccccdc;transform:scaleX(1.1048);transform-origin:center center;">20:26:00</div>
<div class="a" style="left:588px;width:600px;text-align:center;top:427.5px;font-size:12px;line-height:16px;color:#ccccdc;white-space:nowrap;-webkit-text-stroke:0.15px #ccccdc;transform:scaleX(1.1048);transform-origin:center center;">20:27:00</div>
<div class="a" style="left:398px;width:600px;text-align:right;top:319.0px;font-size:12px;line-height:16px;color:#ccccdc;white-space:nowrap;-webkit-text-stroke:0.15px #ccccdc;transform:scaleX(0.9775);transform-origin:right center;">100%</div>
<div class="a" style="left:398px;width:600px;text-align:right;top:378.0px;font-size:12px;line-height:16px;color:#ccccdc;white-space:nowrap;-webkit-text-stroke:0.15px #ccccdc;transform:scaleX(0.9368);transform-origin:right center;">50%</div>
<div class="a" style="left:398px;width:600px;text-align:right;top:436.0px;font-size:12px;line-height:16px;color:#ccccdc;white-space:nowrap;-webkit-text-stroke:0.15px #ccccdc;transform:scaleX(0.8937);transform-origin:right center;">0%</div>
<div class="a" style="left:741.2px;width:600px;text-align:center;top:451.0px;font-size:12px;line-height:16px;color:#ccccdc;white-space:nowrap;-webkit-text-stroke:0.15px #ccccdc;transform:scaleX(1.1048);transform-origin:center center;">20:23:00</div>
<div class="a" style="left:821.4000000000001px;width:600px;text-align:center;top:451.0px;font-size:12px;line-height:16px;color:#ccccdc;white-space:nowrap;-webkit-text-stroke:0.15px #ccccdc;transform:scaleX(1.1048);transform-origin:center center;">20:24:00</div>
<div class="a" style="left:901.4000000000001px;width:600px;text-align:center;top:451.0px;font-size:12px;line-height:16px;color:#ccccdc;white-space:nowrap;-webkit-text-stroke:0.15px #ccccdc;transform:scaleX(1.1048);transform-origin:center center;">20:25:00</div>
<div class="a" style="left:981.3px;width:600px;text-align:center;top:451.0px;font-size:12px;line-height:16px;color:#ccccdc;white-space:nowrap;-webkit-text-stroke:0.15px #ccccdc;transform:scaleX(1.1048);transform-origin:center center;">20:26:00</div>
<div class="a" style="left:1061.3px;width:600px;text-align:center;top:451.0px;font-size:12px;line-height:16px;color:#ccccdc;white-space:nowrap;-webkit-text-stroke:0.15px #ccccdc;transform:scaleX(1.1048);transform-origin:center center;">20:27:00</div>
<div class="a" style="left:892px;width:600px;text-align:right;top:322.0px;font-size:12px;line-height:16px;color:#ccccdc;white-space:nowrap;-webkit-text-stroke:0.15px #ccccdc;transform:scaleX(1.1177);transform-origin:right center;">800 kb/s</div>
<div class="a" style="left:892px;width:600px;text-align:right;top:355.0px;font-size:12px;line-height:16px;color:#ccccdc;white-space:nowrap;-webkit-text-stroke:0.15px #ccccdc;transform:scaleX(1.1177);transform-origin:right center;">600 kb/s</div>
<div class="a" style="left:892px;width:600px;text-align:right;top:388.0px;font-size:12px;line-height:16px;color:#ccccdc;white-space:nowrap;-webkit-text-stroke:0.15px #ccccdc;transform:scaleX(1.1177);transform-origin:right center;">400 kb/s</div>
<div class="a" style="left:892px;width:600px;text-align:right;top:421.0px;font-size:12px;line-height:16px;color:#ccccdc;white-space:nowrap;-webkit-text-stroke:0.15px #ccccdc;transform:scaleX(1.1177);transform-origin:right center;">200 kb/s</div>
<div class="a" style="left:1234px;width:600px;text-align:center;top:451.0px;font-size:12px;line-height:16px;color:#ccccdc;white-space:nowrap;-webkit-text-stroke:0.15px #ccccdc;transform:scaleX(1.1048);transform-origin:center center;">20:23:00</div>
<div class="a" style="left:1310px;width:600px;text-align:center;top:451.0px;font-size:12px;line-height:16px;color:#ccccdc;white-space:nowrap;-webkit-text-stroke:0.15px #ccccdc;transform:scaleX(1.1048);transform-origin:center center;">20:24:00</div>
<div class="a" style="left:1386px;width:600px;text-align:center;top:451.0px;font-size:12px;line-height:16px;color:#ccccdc;white-space:nowrap;-webkit-text-stroke:0.15px #ccccdc;transform:scaleX(1.1048);transform-origin:center center;">20:25:00</div>
<div class="a" style="left:1462px;width:600px;text-align:center;top:451.0px;font-size:12px;line-height:16px;color:#ccccdc;white-space:nowrap;-webkit-text-stroke:0.15px #ccccdc;transform:scaleX(1.1048);transform-origin:center center;">20:26:00</div>
<div class="a" style="left:1538px;width:600px;text-align:center;top:451.0px;font-size:12px;line-height:16px;color:#ccccdc;white-space:nowrap;-webkit-text-stroke:0.15px #ccccdc;transform:scaleX(1.1048);transform-origin:center center;">20:27:00</div>
<div class="lb" style="left:24px;top:454.5px;background:#eab839"></div>
<div class="a" style="left:46px;top:448.0px;font-size:12px;line-height:16px;color:#ccccdc;white-space:nowrap;-webkit-text-stroke:0.15px #ccccdc;transform:scaleX(1.0626);transform-origin:left center;">Busy System</div>
<div class="lb" style="left:131px;top:454.5px;background:#0a50a1"></div>
<div class="a" style="left:153px;top:448.0px;font-size:12px;line-height:16px;color:#ccccdc;white-space:nowrap;-webkit-text-stroke:0.15px #ccccdc;transform:scaleX(1.0642);transform-origin:left center;">Busy User</div>
<div class="lb" style="left:222px;top:454.5px;background:#9a1600"></div>
<div class="a" style="left:244px;top:448.0px;font-size:12px;line-height:16px;color:#ccccdc;white-space:nowrap;-webkit-text-stroke:0.15px #ccccdc;transform:scaleX(1.0822);transform-origin:left center;">Busy Iowait</div>
<div class="lb" style="left:320px;top:454.5px;background:#ff780a"></div>
<div class="a" style="left:342px;top:448.0px;font-size:12px;line-height:16px;color:#ccccdc;white-space:nowrap;-webkit-text-stroke:0.15px #ccccdc;transform:scaleX(1.0132);transform-origin:left center;">Busy IRQs</div>
<div class="lb" style="left:24px;top:477.5px;background:#731e6e"></div>
<div class="a" style="left:46px;top:471.0px;font-size:12px;line-height:16px;color:#ccccdc;white-space:nowrap;-webkit-text-stroke:0.15px #ccccdc;transform:scaleX(1.0730);transform-origin:left center;">Busy Other</div>
<div class="lb" style="left:121px;top:477.5px;background:#7eb26d"></div>
<div class="a" style="left:142px;top:471.0px;font-size:12px;line-height:16px;color:#ccccdc;white-space:nowrap;-webkit-text-stroke:0.15px #ccccdc;transform:scaleX(1.0855);transform-origin:left center;">Idle</div>
<div class="lb" style="left:498px;top:454.5px;background:#e0f9d7"></div>
<div class="a" style="left:520px;top:448.0px;font-size:12px;line-height:16px;color:#ccccdc;white-space:nowrap;-webkit-text-stroke:0.15px #ccccdc;transform:scaleX(1.0684);transform-origin:left center;">RAM Total</div>
<div class="lb" style="left:590px;top:454.5px;background:#f2c80f"></div>
<div class="a" style="left:611px;top:448.0px;font-size:12px;line-height:16px;color:#ccccdc;white-space:nowrap;-webkit-text-stroke:0.15px #ccccdc;transform:scaleX(1.0377);transform-origin:left center;">RAM Used</div>
<div class="lb" style="left:681px;top:454.5px;background:#052b51"></div>
<div class="a" style="left:703px;top:448.0px;font-size:12px;line-height:16px;color:#ccccdc;white-space:nowrap;-webkit-text-stroke:0.15px #ccccdc;transform:scaleX(1.0694);transform-origin:left center;">RAM Cache + Buffer</div>
<div class="lb" style="left:832px;top:454.5px;background:#7eb26d"></div>
<div class="a" style="left:853px;top:448.0px;font-size:12px;line-height:16px;color:#ccccdc;white-space:nowrap;-webkit-text-stroke:0.15px #ccccdc;transform:scaleX(1.0225);transform-origin:left center;">RAM Free</div>
<div class="lb" style="left:498px;top:477.5px;background:#c8200e"></div>
<div class="a" style="left:520px;top:471.0px;font-size:12px;line-height:16px;color:#ccccdc;white-space:nowrap;-webkit-text-stroke:0.15px #ccccdc;transform:scaleX(1.0254);transform-origin:left center;">SWAP Used</div>
<div class="lb" style="left:972px;top:477.5px;background:#73bf69"></div>
<div class="a" style="left:994px;top:471.0px;font-size:12px;line-height:16px;color:#ccccdc;white-space:nowrap;-webkit-text-stroke:0.15px #ccccdc;transform:scaleX(1.4998);transform-origin:left center;">/</div>
<div class="lb" style="left:1008px;top:477.5px;background:#fade2a"></div>
<div class="a" style="left:1030px;top:471.0px;font-size:12px;line-height:16px;color:#ccccdc;white-space:nowrap;-webkit-text-stroke:0.15px #ccccdc;transform:scaleX(1.1735);transform-origin:left center;">/boot/efi</div>
<div class="lb" style="left:1446px;top:477.5px;background:#73bf69"></div>
<div class="a" style="left:1468px;top:471.0px;font-size:12px;line-height:16px;color:#ccccdc;white-space:nowrap;-webkit-text-stroke:0.15px #ccccdc;transform:scaleX(1.1144);transform-origin:left center;">recv eth0</div>
<div class="lb" style="left:1533px;top:477.5px;background:#f2cc0c"></div>
<div class="a" style="left:1555px;top:471.0px;font-size:12px;line-height:16px;color:#ccccdc;white-space:nowrap;-webkit-text-stroke:0.15px #ccccdc;transform:scaleX(1.1150);transform-origin:left center;">trans eth0</div>
<svg style="left:1116px;top:470px" width="16" height="22" viewBox="0 0 16 22"><path d="M1.2 1.2V17.2L5 13.6L7.8 20L10.6 18.8L7.9 12.6H13.2Z" fill="#fff" stroke="#000" stroke-width="1.2" stroke-linejoin="round"/></svg>
<div class="pn" style="left:11px;top:543px;width:1888px;height:221px;"></div>
<div class="tt" style="left:20px;top:553px;transform:scaleX(1.1136);transform-origin:left center;">Height of the chain</div>
<div class="pn" style="left:11px;top:772px;width:939px;height:190px;"></div>
<div class="pn" style="left:959px;top:772px;width:940px;height:190px;"></div>
<svg style="left:0;top:0" width="1915" height="953" viewBox="0 0 1915 953"><defs><linearGradient id="pg0" gradientUnits="userSpaceOnUse" x1="12" y1="577" x2="639" y2="763"><stop offset="0" stop-color="#c52a70"/><stop offset="1" stop-color="#d84fae"/></linearGradient><linearGradient id="pg1" gradientUnits="userSpaceOnUse" x1="642" y1="577" x2="1268" y2="763"><stop offset="0" stop-color="#c52a70"/><stop offset="1" stop-color="#d84fae"/></linearGradient><linearGradient id="pg2" gradientUnits="userSpaceOnUse" x1="1271" y1="577" x2="1898" y2="763"><stop offset="0" stop-color="#c52a70"/><stop offset="1" stop-color="#d84fae"/></linearGradient></defs><rect x="12" y="577" width="627" height="186" rx="2" fill="url(#pg0)"/><path d="M12.1 752.3 L35.2 752.3 L65.5 744.7 L98.2 739.5 L129.2 735.4 L160.3 735.4 L191.3 729.2 L222.3 724.0 L254.4 718.5 L285.4 718.5 L317.1 713.7 L348.1 707.8 L379.1 702.7 L410.1 702.7 L442.9 696.8 L473.9 691.3 L504.9 686.1 L535.9 686.1 L566.9 680.6 L598.0 675.1 L630.0 669.9 L630.0 763 L12.1 763Z" fill="rgba(255,255,255,0.42)"/><path d="M12.1 752.3 L35.2 752.3 L65.5 744.7 L98.2 739.5 L129.2 735.4 L160.3 735.4 L191.3 729.2 L222.3 724.0 L254.4 718.5 L285.4 718.5 L317.1 713.7 L348.1 707.8 L379.1 702.7 L410.1 702.7 L442.9 696.8 L473.9 691.3 L504.9 686.1 L535.9 686.1 L566.9 680.6 L598.0 675.1 L630.0 669.9" fill="none" stroke="rgba(255,255,255,0.55)" stroke-width="1.2"/><rect x="642" y="577" width="626" height="186" rx="2" fill="url(#pg1)"/><path d="M664.5 762.3 L695.5 754.4 L726.5 750.9 L758.2 746.1 L789.2 746.1 L821.3 740.6 L852.3 735.4 L883.3 729.6 L914.3 729.6 L946.4 724.4 L978.1 718.9 L1009.1 713.4 L1040.1 713.4 L1071.8 707.8 L1102.9 702.3 L1133.9 696.8 L1164.9 696.8 L1196.9 691.6 L1228.0 686.1 L1259.3 680.6 L1259.3 763 L664.5 763Z" fill="rgba(255,255,255,0.42)"/><path d="M664.5 762.3 L695.5 754.4 L726.5 750.9 L758.2 746.1 L789.2 746.1 L821.3 740.6 L852.3 735.4 L883.3 729.6 L914.3 729.6 L946.4 724.4 L978.1 718.9 L1009.1 713.4 L1040.1 713.4 L1071.8 707.8 L1102.9 702.3 L1133.9 696.8 L1164.9 696.8 L1196.9 691.6 L1228.0 686.1 L1259.3 680.6" fill="none" stroke="rgba(255,255,255,0.55)" stroke-width="1.2"/><rect x="1271" y="577" width="627" height="186" rx="2" fill="url(#pg2)"/><path d="M1271.1 752.3 L1294.2 752.3 L1324.5 744.7 L1357.2 739.5 L1388.2 735.4 L1419.3 735.4 L1450.3 729.2 L1481.3 724.0 L1513.4 718.5 L1544.4 718.5 L1576.1 713.7 L1607.1 707.8 L1638.1 702.7 L1669.1 702.7 L1701.9 696.8 L1732.9 691.3 L1763.9 686.1 L1794.9 686.1 L1825.9 680.6 L1857.0 675.1 L1889.0 669.9 L1889.0 763 L1271.1 763Z" fill="rgba(255,255,255,0.42)"/><path d="M1271.1 752.3 L1294.2 752.3 L1324.5 744.7 L1357.2 739.5 L1388.2 735.4 L1419.3 735.4 L1450.3 729.2 L1481.3 724.0 L1513.4 718.5 L1544.4 718.5 L1576.1 713.7 L1607.1 707.8 L1638.1 702.7 L1669.1 702.7 L1701.9 696.8 L1732.9 691.3 L1763.9 686.1 L1794.9 686.1 L1825.9 680.6 L1857.0 675.1 L1889.0 669.9" fill="none" stroke="rgba(255,255,255,0.55)" stroke-width="1.2"/><path d="M49.0 841.4 L112.0 849.7 L199.0 852.2 L285.0 852.5 L372.0 852.7 L459.0 854.0 L545.0 855.0 L632.0 857.0 L718.0 858.0 L805.0 858.4 L850.0 853.0 L892.0 848.0 L892 951 L49 951Z" fill="#635757"/><path d="M49.0 907.0 L112.0 909.9 L285.0 911.5 L459.0 912.9 L632.0 914.5 L805.0 915.5 L892.0 911.4 L892 951 L49 951Z" fill="#85786f"/><path d="M49.0 927.4 L112.0 929.5 L459.0 931.5 L805.0 932.6 L892.0 930.6 L892 951 L49 951Z" fill="#877b7b"/><path d="M49.0 841.4 L112.0 849.7 L199.0 852.2 L285.0 852.5 L372.0 852.7 L459.0 854.0 L545.0 855.0 L632.0 857.0 L718.0 858.0 L805.0 858.4 L850.0 853.0 L892.0 848.0" fill="none" stroke="#2a5aa8" stroke-width="1.1"/><path d="M49.0 907.0 L112.0 909.9 L285.0 911.5 L459.0 912.9 L632.0 914.5 L805.0 915.5 L892.0 911.4" fill="none" stroke="#b8d0a8" stroke-width="1.5"/><path d="M49.0 919.0 L112.0 921.4 L459.0 924.0 L805.0 925.7 L892.0 921.9" fill="none" stroke="#d09a60" stroke-width="1.1"/><path d="M49.0 927.4 L112.0 929.5 L459.0 931.5 L805.0 932.6 L892.0 930.6" fill="none" stroke="#5a5ab0" stroke-width="1.4"/><path d="M49 947.4H892" stroke="#73a060" stroke-width="1.5"/><path d="M49 949.8H892" stroke="#e0b060" stroke-width="2"/><path d="M45 823.5H915" stroke="rgba(204,204,220,0.13)" stroke-width="1"/><path d="M45 865.5H915" stroke="rgba(204,204,220,0.13)" stroke-width="1"/><path d="M45 907.5H915" stroke="rgba(204,204,220,0.13)" stroke-width="1"/><path d="M45 949.5H915" stroke="rgba(204,204,220,0.13)" stroke-width="1"/><path d="M112.5 823V953" stroke="rgba(204,204,220,0.13)" stroke-width="1"/><path d="M199.5 823V953" stroke="rgba(204,204,220,0.13)" stroke-width="1"/><path d="M285.5 823V953" stroke="rgba(204,204,220,0.13)" stroke-width="1"/><path d="M372.5 823V953" stroke="rgba(204,204,220,0.13)" stroke-width="1"/><path d="M459.5 823V953" stroke="rgba(204,204,220,0.13)" stroke-width="1"/><path d="M546.5 823V953" stroke="rgba(204,204,220,0.13)" stroke-width="1"/><path d="M632.5 823V953" stroke="rgba(204,204,220,0.13)" stroke-width="1"/><path d="M718.5 823V953" stroke="rgba(204,204,220,0.13)" stroke-width="1"/><path d="M805.5 823V953" stroke="rgba(204,204,220,0.13)" stroke-width="1"/><path d="M892.5 823V953" stroke="rgba(204,204,220,0.13)" stroke-width="1"/><path d="M1012 823.5H1863" stroke="rgba(204,204,220,0.16)" stroke-width="1"/><path d="M1012 854.5H1863" stroke="rgba(204,204,220,0.16)" stroke-width="1"/><path d="M1012 886.5H1863" stroke="rgba(204,204,220,0.16)" stroke-width="1"/><path d="M1012 918.5H1863" stroke="rgba(204,204,220,0.16)" stroke-width="1"/><path d="M1012 949.5H1863" stroke="rgba(204,204,220,0.16)" stroke-width="1"/><path d="M1074.5 823V953" stroke="rgba(204,204,220,0.16)" stroke-width="1"/><path d="M1159.5 823V953" stroke="rgba(204,204,220,0.16)" stroke-width="1"/><path d="M1244.5 823V953" stroke="rgba(204,204,220,0.16)" stroke-width="1"/><path d="M1329.5 823V953" stroke="rgba(204,204,220,0.16)" stroke-width="1"/><path d="M1415.5 823V953" stroke="rgba(204,204,220,0.16)" stroke-width="1"/><path d="M1500.5 823V953" stroke="rgba(204,204,220,0.16)" stroke-width="1"/><path d="M1586.5 823V953" stroke="rgba(204,204,220,0.16)" stroke-width="1"/><path d="M1671.5 823V953" stroke="rgba(204,204,220,0.16)" stroke-width="1"/><path d="M1756.5 823V953" stroke="rgba(204,204,220,0.16)" stroke-width="1"/><path d="M1841.5 823V953" stroke="rgba(204,204,220,0.16)" stroke-width="1"/><path d="M1012 886.5H1840.6" stroke="#a8b89c" stroke-width="2"/><defs><linearGradient id="ld" x1="0" x2="1"><stop offset="0" stop-color="#6e9fff" stop-opacity="0"/><stop offset="0.8" stop-color="#6e9fff" stop-opacity="1"/><stop offset="1" stop-color="#6e9fff" stop-opacity="0"/></linearGradient></defs><rect x="460" y="772" width="262" height="2" fill="url(#ld)"/><rect x="1408" y="772" width="260" height="2" fill="url(#ld)"/></svg>
<div class="a" style="left:178.5px;top:651px;font-size:33px;line-height:36px;color:#f6f6f9;white-space:nowrap;-webkit-text-stroke:0.3px #f6f6f9;transform:scaleX(0.9780);transform-origin:left center;">best</div>
<div class="a" style="left:243px;top:633px;font-size:70px;line-height:72px;color:#f6f6f9;white-space:nowrap;-webkit-text-stroke:1px #f6f6f9;transform:scaleX(1.0604);transform-origin:left center;">69,496</div>
<div class="a" style="left:779px;top:651px;font-size:33px;line-height:36px;color:#f6f6f9;white-space:nowrap;-webkit-text-stroke:0.3px #f6f6f9;transform:scaleX(0.9747);transform-origin:left center;">finalized</div>
<div class="a" style="left:900.5px;top:633px;font-size:70px;line-height:72px;color:#f6f6f9;white-space:nowrap;-webkit-text-stroke:1px #f6f6f9;transform:scaleX(1.0650);transform-origin:left center;">69,494</div>
<div class="a" style="left:1386px;top:651px;font-size:33px;line-height:36px;color:#f6f6f9;white-space:nowrap;-webkit-text-stroke:0.3px #f6f6f9;transform:scaleX(0.9673);transform-origin:left center;">sync_target</div>
<div class="a" style="left:1554px;top:633px;font-size:70px;line-height:72px;color:#f6f6f9;white-space:nowrap;-webkit-text-stroke:1px #f6f6f9;transform:scaleX(1.0632);transform-origin:left center;">69,496</div>
<div class="tt" style="left:20px;top:781px;transform:scaleX(1.0925);transform-origin:left center;">Tasks rate</div>
<div class="tt" style="left:968px;top:781px;transform:scaleX(1.0779);transform-origin:left center;">Running Tasks</div>
<div class="a" style="left:-557px;width:600px;text-align:right;top:815.0px;font-size:12px;line-height:16px;color:#ccccdc;white-space:nowrap;-webkit-text-stroke:0.15px #ccccdc;transform:scaleX(1.0740);transform-origin:right center;">300</div>
<div class="a" style="left:-557px;width:600px;text-align:right;top:857.0px;font-size:12px;line-height:16px;color:#ccccdc;white-space:nowrap;-webkit-text-stroke:0.15px #ccccdc;transform:scaleX(1.0740);transform-origin:right center;">200</div>
<div class="a" style="left:-557px;width:600px;text-align:right;top:899.0px;font-size:12px;line-height:16px;color:#ccccdc;white-space:nowrap;-webkit-text-stroke:0.15px #ccccdc;transform:scaleX(1.0740);transform-origin:right center;">100</div>
<div class="a" style="left:-557px;width:600px;text-align:right;top:941.0px;font-size:12px;line-height:16px;color:#ccccdc;white-space:nowrap;-webkit-text-stroke:0.15px #ccccdc;transform:scaleX(1.0790);transform-origin:right center;">0</div>
<div class="a" style="left:407px;width:600px;text-align:right;top:815.0px;font-size:12px;line-height:16px;color:#ccccdc;white-space:nowrap;-webkit-text-stroke:0.15px #ccccdc;transform:scaleX(0.8242);transform-origin:right center;">1</div>
<div class="a" style="left:407px;width:600px;text-align:right;top:846.0px;font-size:12px;line-height:16px;color:#ccccdc;white-space:nowrap;-webkit-text-stroke:0.15px #ccccdc;transform:scaleX(1.0524);transform-origin:right center;">0.500</div>
<div class="a" style="left:407px;width:600px;text-align:right;top:878.0px;font-size:12px;line-height:16px;color:#ccccdc;white-space:nowrap;-webkit-text-stroke:0.15px #ccccdc;transform:scaleX(1.0790);transform-origin:right center;">0</div>
<div class="a" style="left:407px;width:600px;text-align:right;top:909.0px;font-size:12px;line-height:16px;color:#ccccdc;white-space:nowrap;-webkit-text-stroke:0.15px #ccccdc;transform:scaleX(1.1052);transform-origin:right center;">-0.500</div>
<div class="a" style="left:407px;width:600px;text-align:right;top:940.0px;font-size:12px;line-height:16px;color:#ccccdc;white-space:nowrap;-webkit-text-stroke:0.15px #ccccdc;transform:scaleX(1.0310);transform-origin:right center;">-1</div></body></html>
